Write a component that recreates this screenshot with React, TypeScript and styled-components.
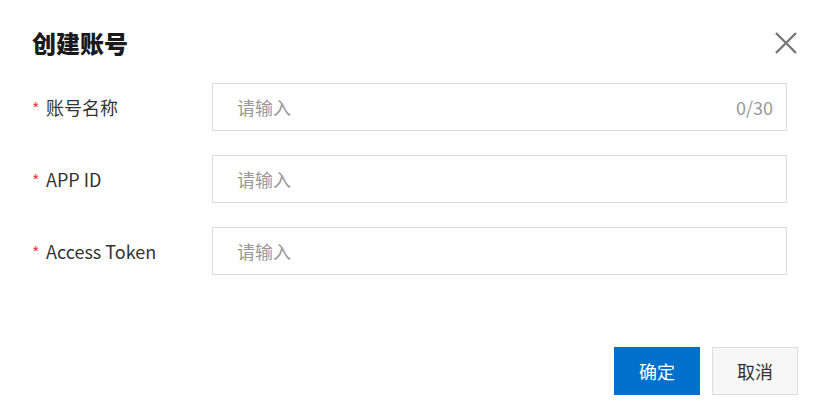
import React from "react";
import styled, { createGlobalStyle } from "styled-components";

const Global = createGlobalStyle`
  html, body { margin: 0; padding: 0; background: #fff; }
  body { font-family: "Noto Sans CJK SC", "Noto Sans", sans-serif; }
  * { box-sizing: border-box; }
`;

const Dialog = styled.div`
  width: 827px;
  height: 414px;
  background: #fff;
  padding: 27px 29px 0 32px;
  display: flex;
  flex-direction: column;
`;

const Header = styled.div`
  display: flex;
  justify-content: space-between;
  align-items: center;
  height: 32px;
`;

const Title = styled.h2`
  margin: 0;
  font-size: 24px;
  line-height: 32px;
  font-weight: 900;
  color: #1a1a1a;
`;

const CloseButton = styled.button`
  border: none;
  background: transparent;
  padding: 0;
  margin-right: 1px;
  width: 22px;
  height: 22px;
  display: flex;
  align-items: center;
  justify-content: center;
  cursor: pointer;
`;

const Form = styled.div`
  margin-top: 24px;
  width: 755px;
  display: flex;
  flex-direction: column;
  gap: 24px;
`;

const Row = styled.div`
  display: grid;
  grid-template-columns: 180px 1fr;
  align-items: center;
`;

const Label = styled.label`
  font-size: 18px;
  color: #333;
  display: flex;
  align-items: center;
`;

const Star = styled.span`
  color: #e54545;
  font-size: 16px;
  width: 14px;
  position: relative;
  top: 1px;
`;

const InputBox = styled.div`
  height: 48px;
  border: 1px solid #dcdcdc;
  display: flex;
  align-items: center;
  padding: 0 13px 0 24px;
  background: #fff;
`;

const Input = styled.input`
  flex: 1;
  border: none;
  outline: none;
  font-family: inherit;
  font-size: 18px;
  color: #333;
  background: transparent;
  padding: 0;
  &::placeholder { color: #999; }
`;

const Counter = styled.span`
  font-size: 18px;
  color: #999;
`;

const Footer = styled.div`
  margin-top: 72px;
  display: flex;
  justify-content: flex-end;
  gap: 12px;
`;

const Button = styled.button<{ $primary?: boolean }>`
  width: 86px;
  height: 48px;
  font-family: inherit;
  font-size: 18px;
  cursor: pointer;
  border: 1px solid ${(p) => (p.$primary ? "#0070cc" : "#dcdcdc")};
  background: ${(p) => (p.$primary ? "#0070cc" : "#f7f7f7")};
  color: ${(p) => (p.$primary ? "#fff" : "#333")};
`;

const fields = [
  { label: "账号名称", counter: "0/30" },
  { label: "APP ID" },
  { label: "Access Token" },
];

export default function App() {
  return (
    <>
      <Global />
      <Dialog>
        <Header>
          <Title>创建账号</Title>
          <CloseButton aria-label="关闭">
            <svg width="22" height="22" viewBox="0 0 22 22">
              <path d="M1 1 L21 21 M21 1 L1 21" stroke="#777" strokeWidth="2.4" fill="none" />
            </svg>
          </CloseButton>
        </Header>
        <Form>
          {fields.map((f) => (
            <Row key={f.label}>
              <Label>
                <Star>*</Star>
                {f.label}
              </Label>
              <InputBox>
                <Input placeholder="请输入" />
                {f.counter && <Counter>{f.counter}</Counter>}
              </InputBox>
            </Row>
          ))}
        </Form>
        <Footer>
          <Button $primary>确定</Button>
          <Button>取消</Button>
        </Footer>
      </Dialog>
    </>
  );
}
